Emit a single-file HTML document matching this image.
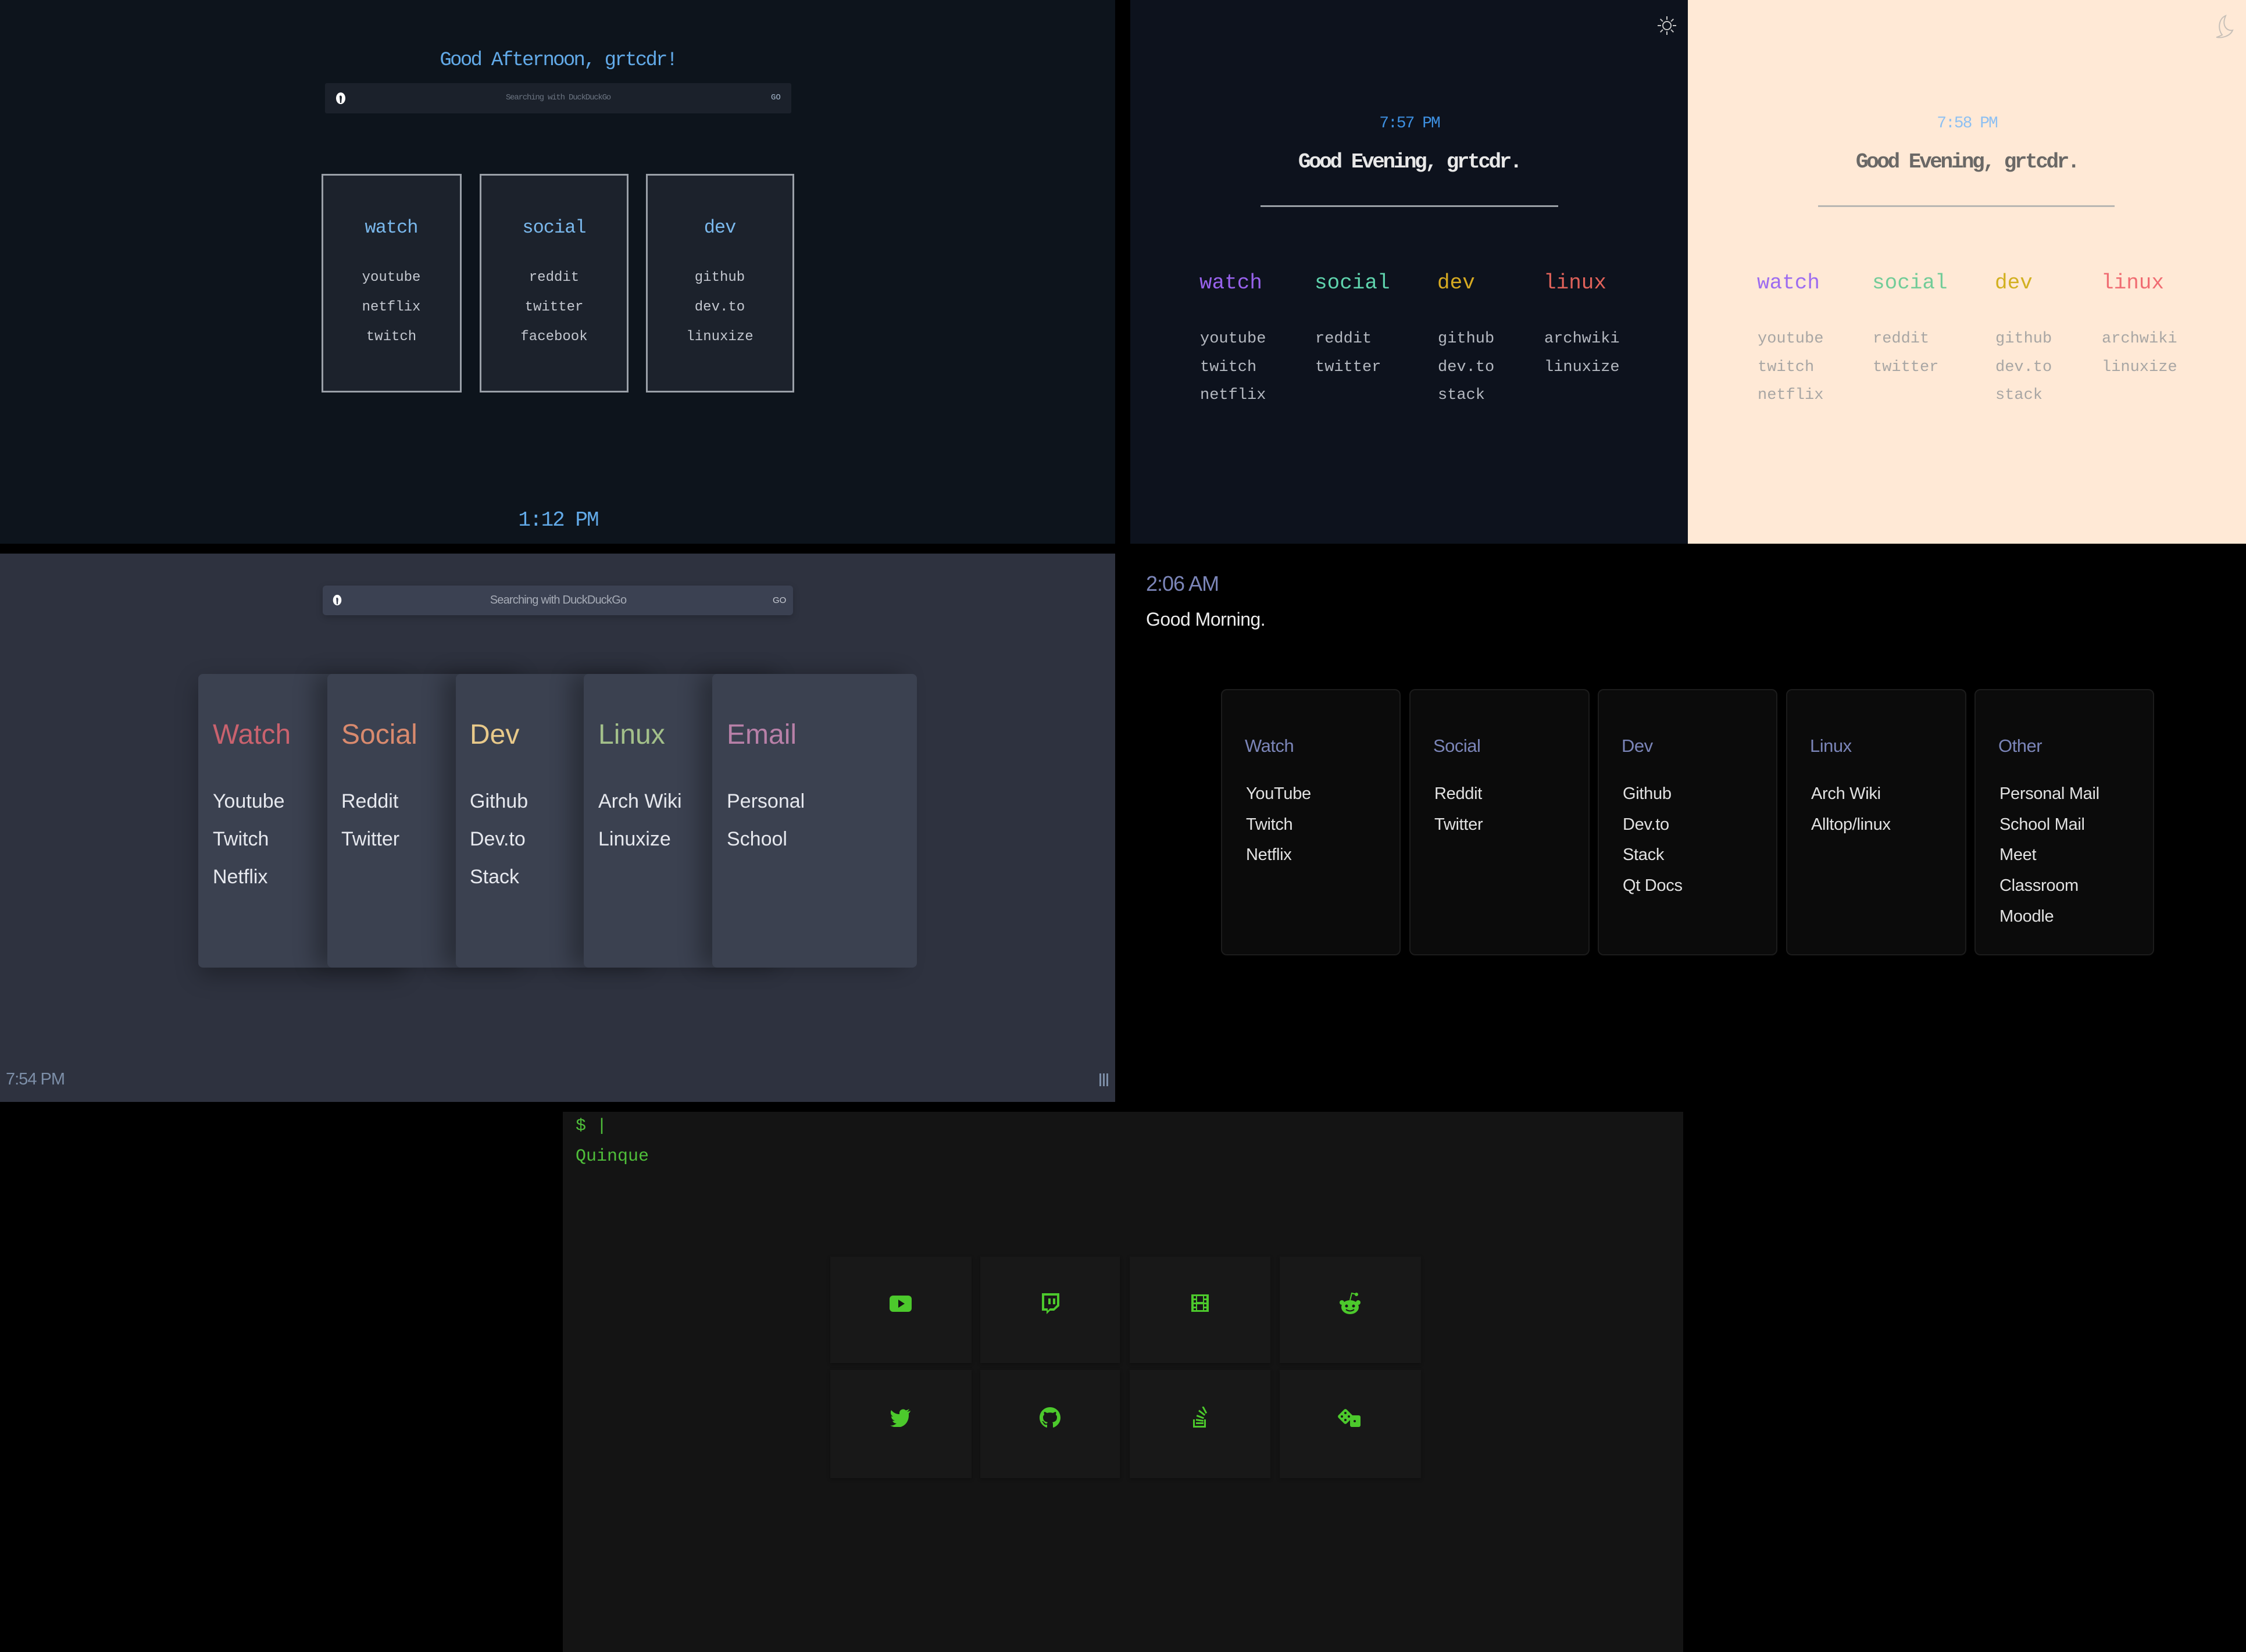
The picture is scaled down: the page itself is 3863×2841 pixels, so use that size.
<!DOCTYPE html>
<html><head><meta charset="utf-8"><style>
*{margin:0;padding:0;box-sizing:border-box}
body{width:3863px;height:2841px;background:#000;position:relative;overflow:hidden;font-family:"Liberation Sans",sans-serif}
.p{position:absolute}
.t{position:absolute;white-space:nowrap;line-height:1}
.m{font-family:"Liberation Mono",monospace}
.c{text-align:center}
</style></head><body>

<!-- TOP LEFT -->
<div class="p" style="left:0;top:0;width:1918px;height:935px;background:#0d141c"></div>
<div class="t m c" style="left:460px;width:1000px;top:87px;font-size:34px;letter-spacing:-2.7px;color:#62aae8">Good Afternoon, grtcdr!</div>
<div class="p" style="left:559px;top:143px;width:802px;height:52px;background:#1b212b;border-radius:3px"></div>
<svg class="p" style="left:575px;top:157px" width="22" height="24" viewBox="0 0 22 24"><ellipse cx="11" cy="12" rx="8" ry="10" fill="#fff"/><path d="M9 8 Q12 6 13 10 L12 20 L10 20 Z" fill="#1b212b"/></svg>
<div class="t m c" style="left:760px;width:400px;top:161px;font-size:14px;letter-spacing:-1.2px;color:#6b7481">Searching with DuckDuckGo</div>
<div class="t m" style="left:1326px;top:161px;font-size:14px;color:#a6b8cc">GO</div>

<div class="p" style="left:553px;top:299px;width:241px;height:376px;background:#1c222c;border:3px solid #9aa0a8"></div>
<div class="p" style="left:825px;top:299px;width:256px;height:376px;background:#1c222c;border:3px solid #9aa0a8"></div>
<div class="p" style="left:1111px;top:299px;width:255px;height:376px;background:#1c222c;border:3px solid #9aa0a8"></div>
<div class="t m c" style="left:573px;width:200px;top:376px;font-size:32px;letter-spacing:-1px;color:#7ab8ec">watch</div>
<div class="t m c" style="left:853px;width:200px;top:376px;font-size:32px;letter-spacing:-1px;color:#7ab8ec">social</div>
<div class="t m c" style="left:1138px;width:200px;top:376px;font-size:32px;letter-spacing:-1px;color:#7ab8ec">dev</div>
<div class="t m c" style="left:573px;width:200px;top:452px;font-size:24px;line-height:51px;color:#c4c8d0">youtube<br>netflix<br>twitch</div>
<div class="t m c" style="left:853px;width:200px;top:452px;font-size:24px;line-height:51px;color:#c4c8d0">reddit<br>twitter<br>facebook</div>
<div class="t m c" style="left:1138px;width:200px;top:452px;font-size:24px;line-height:51px;color:#c4c8d0">github<br>dev.to<br>linuxize</div>
<div class="t m c" style="left:760px;width:400px;top:877px;font-size:36px;letter-spacing:-2px;color:#62aae8">1:12 PM</div>

<!-- TOP RIGHT DARK -->
<div class="p" style="left:1944px;top:0;width:959px;height:935px;background:#0d121d"></div>
<svg class="p" style="left:2849px;top:26px" width="36" height="36" viewBox="0 0 36 36" fill="none" stroke="#c8c8c8" stroke-width="2"><circle cx="18" cy="18" r="7"/><path d="M18 2v6M18 28v6M2 18h6M28 18h6M6.7 6.7l4.2 4.2M25.1 25.1l4.2 4.2M6.7 29.3l4.2-4.2M25.1 10.9l4.2-4.2"/></svg>
<div class="t m c" style="left:2224px;width:400px;top:199px;font-size:28px;letter-spacing:-2px;color:#3d8fe0">7:57 PM</div>
<div class="t m c" style="left:2124px;width:600px;top:261px;font-size:36px;letter-spacing:-3.4px;color:#e8e8e8;font-weight:600">Good Evening, grtcdr.</div>
<div class="p" style="left:2168px;top:353px;width:512px;height:3px;background:#9aa0a6"></div>
<div class="t m" style="left:2063px;top:469px;font-size:36px;color:#9862ec">watch</div>
<div class="t m" style="left:2261px;top:469px;font-size:36px;color:#5fd3ad">social</div>
<div class="t m" style="left:2472px;top:469px;font-size:36px;color:#d6aa22">dev</div>
<div class="t m" style="left:2655px;top:469px;font-size:36px;color:#e0625a">linux</div>
<div class="t m" style="left:2064px;top:559px;font-size:27px;line-height:48.5px;color:#b4b8c0">youtube<br>twitch<br>netflix</div>
<div class="t m" style="left:2262px;top:559px;font-size:27px;line-height:48.5px;color:#b4b8c0">reddit<br>twitter</div>
<div class="t m" style="left:2473px;top:559px;font-size:27px;line-height:48.5px;color:#b4b8c0">github<br>dev.to<br>stack</div>
<div class="t m" style="left:2656px;top:559px;font-size:27px;line-height:48.5px;color:#b4b8c0">archwiki<br>linuxize</div>

<!-- PEACH -->
<div class="p" style="left:2903px;top:0;width:960px;height:935px;background:#ffe9d6"></div>
<svg class="p" style="left:3808px;top:24px" width="34" height="42" viewBox="0 0 34 42" fill="none" stroke="#c8c0b8" stroke-width="2"><path d="M20 3 C8 8 6 26 14 36 C10 38 6 40 4 40 C14 42 28 38 32 28 C24 30 12 22 20 3 Z"/></svg>
<div class="t m c" style="left:3183px;width:400px;top:199px;font-size:28px;letter-spacing:-2px;color:#8ec0f2">7:58 PM</div>
<div class="t m c" style="left:3083px;width:600px;top:261px;font-size:36px;letter-spacing:-3.4px;color:#6a6866;font-weight:600">Good Evening, grtcdr.</div>
<div class="p" style="left:3127px;top:353px;width:510px;height:3px;background:#b8b6b2"></div>
<div class="t m" style="left:3022px;top:469px;font-size:36px;color:#9d6cf0">watch</div>
<div class="t m" style="left:3220px;top:469px;font-size:36px;color:#72cc98">social</div>
<div class="t m" style="left:3431px;top:469px;font-size:36px;color:#d2b020">dev</div>
<div class="t m" style="left:3614px;top:469px;font-size:36px;color:#f06c72">linux</div>
<div class="t m" style="left:3023px;top:559px;font-size:27px;line-height:48.5px;color:#a8a6a4">youtube<br>twitch<br>netflix</div>
<div class="t m" style="left:3221px;top:559px;font-size:27px;line-height:48.5px;color:#a8a6a4">reddit<br>twitter</div>
<div class="t m" style="left:3432px;top:559px;font-size:27px;line-height:48.5px;color:#a8a6a4">github<br>dev.to<br>stack</div>
<div class="t m" style="left:3615px;top:559px;font-size:27px;line-height:48.5px;color:#a8a6a4">archwiki<br>linuxize</div>

<!-- MIDDLE LEFT -->
<div class="p" style="left:0;top:952px;width:1918px;height:943px;background:#2e323f"></div>
<div class="p" style="left:555px;top:1007px;width:809px;height:51px;background:#3b4152;border-radius:6px;box-shadow:0 4px 12px rgba(0,0,0,.2)"></div>
<svg class="p" style="left:570px;top:1021px" width="20" height="22" viewBox="0 0 22 24"><ellipse cx="11" cy="12" rx="8" ry="10" fill="#fff"/><path d="M9 8 Q12 6 13 10 L12 20 L10 20 Z" fill="#3b4152"/></svg>
<div class="t c" style="left:760px;width:400px;top:1022px;font-size:20px;letter-spacing:-0.8px;color:#a6abb6">Searching with DuckDuckGo</div>
<div class="t" style="left:1329px;top:1025px;font-size:15px;color:#c8ccd4">GO</div>

<div class="p" style="left:341px;top:1159px;width:352px;height:505px;background:#3b4150;border-radius:8px;box-shadow:0 14px 40px rgba(0,0,0,.3)"></div>
<div class="p" style="left:563px;top:1159px;width:352px;height:505px;background:#3b4150;border-radius:8px;box-shadow:-22px 0 36px rgba(0,0,0,.3)"></div>
<div class="p" style="left:784px;top:1159px;width:352px;height:505px;background:#3b4150;border-radius:8px;box-shadow:-22px 0 36px rgba(0,0,0,.3)"></div>
<div class="p" style="left:1004px;top:1159px;width:352px;height:505px;background:#3b4150;border-radius:8px;box-shadow:-22px 0 36px rgba(0,0,0,.3)"></div>
<div class="p" style="left:1225px;top:1159px;width:352px;height:505px;background:#3b4150;border-radius:8px;box-shadow:-22px 0 36px rgba(0,0,0,.3)"></div>
<div class="t" style="left:366px;top:1240px;font-size:48px;color:#c9626e">Watch</div>
<div class="t" style="left:587px;top:1240px;font-size:48px;color:#d98a6e">Social</div>
<div class="t" style="left:808px;top:1240px;font-size:48px;color:#e8c98a">Dev</div>
<div class="t" style="left:1029px;top:1240px;font-size:48px;color:#a3c08a">Linux</div>
<div class="t" style="left:1250px;top:1240px;font-size:48px;color:#b880a8">Email</div>
<div class="t" style="left:366px;top:1346px;font-size:34px;line-height:65px;color:#e6e8ee">Youtube<br>Twitch<br>Netflix</div>
<div class="t" style="left:587px;top:1346px;font-size:34px;line-height:65px;color:#e6e8ee">Reddit<br>Twitter</div>
<div class="t" style="left:808px;top:1346px;font-size:34px;line-height:65px;color:#e6e8ee">Github<br>Dev.to<br>Stack</div>
<div class="t" style="left:1029px;top:1346px;font-size:34px;line-height:65px;color:#e6e8ee">Arch Wiki<br>Linuxize</div>
<div class="t" style="left:1250px;top:1346px;font-size:34px;line-height:65px;color:#e6e8ee">Personal<br>School</div>
<div class="t" style="left:10px;top:1842px;font-size:29px;letter-spacing:-1px;color:#7d8fa8">7:54 PM</div>
<div class="p" style="left:1891px;top:1846px;width:3px;height:22px;background:#7d8fa8"></div>
<div class="p" style="left:1897px;top:1846px;width:3px;height:22px;background:#7d8fa8"></div>
<div class="p" style="left:1903px;top:1846px;width:3px;height:22px;background:#7d8fa8"></div>

<!-- MIDDLE RIGHT -->
<div class="t" style="left:1971px;top:986px;font-size:36px;letter-spacing:-1px;color:#7b85b8">2:06 AM</div>
<div class="t" style="left:1971px;top:1049px;font-size:32px;letter-spacing:-0.5px;color:#ececec">Good Morning.</div>
<div class="p" style="left:2100px;top:1185px;width:309px;height:458px;background:#0b0b0b;border:2px solid #1c1c1c;border-radius:10px"></div>
<div class="p" style="left:2424px;top:1185px;width:310px;height:458px;background:#0b0b0b;border:2px solid #1c1c1c;border-radius:10px"></div>
<div class="p" style="left:2748px;top:1185px;width:309px;height:458px;background:#0b0b0b;border:2px solid #1c1c1c;border-radius:10px"></div>
<div class="p" style="left:3072px;top:1185px;width:310px;height:458px;background:#0b0b0b;border:2px solid #1c1c1c;border-radius:10px"></div>
<div class="p" style="left:3396px;top:1185px;width:309px;height:458px;background:#0b0b0b;border:2px solid #1c1c1c;border-radius:10px"></div>
<div class="t" style="left:2141px;top:1267px;font-size:31px;letter-spacing:-0.5px;color:#7b85b8">Watch</div>
<div class="t" style="left:2465px;top:1267px;font-size:31px;letter-spacing:-0.5px;color:#7b85b8">Social</div>
<div class="t" style="left:2789px;top:1267px;font-size:31px;letter-spacing:-0.5px;color:#7b85b8">Dev</div>
<div class="t" style="left:3113px;top:1267px;font-size:31px;letter-spacing:-0.5px;color:#7b85b8">Linux</div>
<div class="t" style="left:3437px;top:1267px;font-size:31px;letter-spacing:-0.5px;color:#7b85b8">Other</div>
<div class="t" style="left:2143px;top:1339px;font-size:29px;line-height:52.7px;letter-spacing:-0.3px;color:#e2e2e2">YouTube<br>Twitch<br>Netflix</div>
<div class="t" style="left:2467px;top:1339px;font-size:29px;line-height:52.7px;letter-spacing:-0.3px;color:#e2e2e2">Reddit<br>Twitter</div>
<div class="t" style="left:2791px;top:1339px;font-size:29px;line-height:52.7px;letter-spacing:-0.3px;color:#e2e2e2">Github<br>Dev.to<br>Stack<br>Qt Docs</div>
<div class="t" style="left:3115px;top:1339px;font-size:29px;line-height:52.7px;letter-spacing:-0.3px;color:#e2e2e2">Arch Wiki<br>Alltop/linux</div>
<div class="t" style="left:3439px;top:1339px;font-size:29px;line-height:52.7px;letter-spacing:-0.3px;color:#e2e2e2">Personal Mail<br>School Mail<br>Meet<br>Classroom<br>Moodle</div>

<!-- BOTTOM -->
<div class="p" style="left:968px;top:1912px;width:1927px;height:929px;background:#141414"></div>
<div class="t m" style="left:990px;top:1922px;font-size:30px;color:#4fbf3a">$ |</div>
<div class="t m" style="left:990px;top:1974px;font-size:30px;color:#4fbf3a">Quinque</div>

<div class="p" style="left:1428px;top:2161px;width:243px;height:183px;background:#181818;box-shadow:0 2px 6px rgba(0,0,0,.3)"></div>
<div class="p" style="left:1686px;top:2161px;width:240px;height:183px;background:#181818;box-shadow:0 2px 6px rgba(0,0,0,.3)"></div>
<div class="p" style="left:1943px;top:2161px;width:242px;height:183px;background:#181818;box-shadow:0 2px 6px rgba(0,0,0,.3)"></div>
<div class="p" style="left:2201px;top:2161px;width:243px;height:183px;background:#181818;box-shadow:0 2px 6px rgba(0,0,0,.3)"></div>
<div class="p" style="left:1428px;top:2356px;width:243px;height:186px;background:#181818;box-shadow:0 2px 6px rgba(0,0,0,.3)"></div>
<div class="p" style="left:1686px;top:2356px;width:240px;height:186px;background:#181818;box-shadow:0 2px 6px rgba(0,0,0,.3)"></div>
<div class="p" style="left:1943px;top:2356px;width:242px;height:186px;background:#181818;box-shadow:0 2px 6px rgba(0,0,0,.3)"></div>
<div class="p" style="left:2201px;top:2356px;width:243px;height:186px;background:#181818;box-shadow:0 2px 6px rgba(0,0,0,.3)"></div>

<!-- icons -->
<svg class="p" style="left:1529px;top:2227px" width="40" height="30" viewBox="0 0 40 30"><rect x="1" y="1" width="38" height="28" rx="6" fill="#4cc92c"/><path d="M16 8 L27 15 L16 22 Z" fill="#141414"/></svg>
<svg class="p" style="left:1788px;top:2222px" width="36" height="38" viewBox="0 0 36 38" fill="#4cc92c"><path d="M4 2 L34 2 L34 24 L25 32 L18 32 L12 38 L12 32 L4 32 Z M8 6 L8 28 L14 28 L14 32 L18 28 L24 28 L30 22 L30 6 Z M15 11 h4 v10 h-4z M23 11 h4 v10 h-4z"/></svg>
<svg class="p" style="left:2047px;top:2224px" width="34" height="34" viewBox="0 0 34 34" fill="#4cc92c"><path d="M2 2 h30 v30 h-30z M6 5 v4 h4 v-4z M6 12 v4 h4 v-4z M6 19 v4 h4 v-4z M6 26 v3 h4 v-3z M24 5 v4 h4 v-4z M24 12 v4 h4 v-4z M24 19 v4 h4 v-4z M24 26 v3 h4 v-3z M12 5 v10 h10 v-10z M12 19 v10 h10 v-10z" fill-rule="evenodd"/></svg>
<svg class="p" style="left:2302px;top:2220px" width="40" height="42" viewBox="0 0 40 42" fill="#4cc92c"><ellipse cx="20" cy="28" rx="15" ry="12"/><circle cx="6" cy="20" r="4"/><circle cx="34" cy="20" r="4"/><path d="M20 16 L23 4 L31 6" stroke="#4cc92c" stroke-width="2" fill="none"/><circle cx="31" cy="6" r="3"/><circle cx="14" cy="26" r="2.5" fill="#181818"/><circle cx="26" cy="26" r="2.5" fill="#181818"/><path d="M13 32 Q20 37 27 32" stroke="#181818" stroke-width="2" fill="none"/></svg>
<svg class="p" style="left:1531px;top:2422px" width="36" height="32" viewBox="0 0 36 32" fill="#4cc92c"><path d="M35 4 C33 5 31 5.5 29 6 C31 4.5 32 3 33 1 C31 2 29 3 27 3.5 C23 -0.5 16 2 16 8 L16 10 C10 10 5 7 2 3 C0 7 1 12 5 14 C4 14 3 14 2 13.5 C2 17 4 20 8 21 C6 21.5 5 21.5 4 21.5 C5 24 8 26 11 26 C7 29 3 30 0 29.5 C16 38 33 29 32 10 L32 8.5 C33.5 7.5 34.5 6 35 4 Z"/></svg>
<svg class="p" style="left:1787px;top:2419px" width="38" height="38" viewBox="0 0 38 38" fill="#4cc92c"><path d="M19 1 C9 1 1 9 1 19 C1 27 6 33 13 36 C14 36 14 35 14 35 L14 31 C9 32 8 29 8 29 C7 27 6 26 6 26 C4 25 6 25 6 25 C8 25 9 27 9 27 C11 30 13 29 14 29 C14 28 15 27 15 27 C11 26 7 25 7 18 C7 16 8 15 9 14 C9 13 8 11 9 9 C9 9 11 9 14 11 C17 10 21 10 24 11 C27 9 29 9 29 9 C30 11 29 13 29 14 C30 15 31 16 31 18 C31 25 27 26 23 27 C24 28 24 29 24 31 L24 35 C24 35 24 36 25 36 C32 33 37 27 37 19 C37 9 29 1 19 1 Z"/></svg>
<svg class="p" style="left:2048px;top:2419px" width="32" height="38" viewBox="0 0 32 38" fill="#4cc92c"><path d="M4 22 v14 h22 v-14 h-3 v11 h-16 v-11z"/><rect x="9" y="27" width="13" height="3"/><rect x="9" y="22" width="13" height="3" transform="rotate(8 15 23)"/><rect x="10" y="16" width="13" height="3" transform="rotate(20 16 17)"/><rect x="13" y="9" width="13" height="3" transform="rotate(38 19 10)"/><rect x="18" y="4" width="13" height="3" transform="rotate(62 24 5)"/></svg>
<svg class="p" style="left:2300px;top:2418px" width="44" height="40" viewBox="0 0 44 40" fill="#4cc92c"><rect x="4" y="8" width="20" height="20" rx="3" transform="rotate(45 14 18)"/><rect x="22" y="16" width="18" height="20" rx="3"/><circle cx="14" cy="12" r="2" fill="#181818"/><circle cx="8" cy="18" r="2" fill="#181818"/><circle cx="20" cy="18" r="2" fill="#181818"/><circle cx="14" cy="24" r="2" fill="#181818"/><circle cx="30" cy="26" r="2" fill="#181818"/></svg>

</body></html>
